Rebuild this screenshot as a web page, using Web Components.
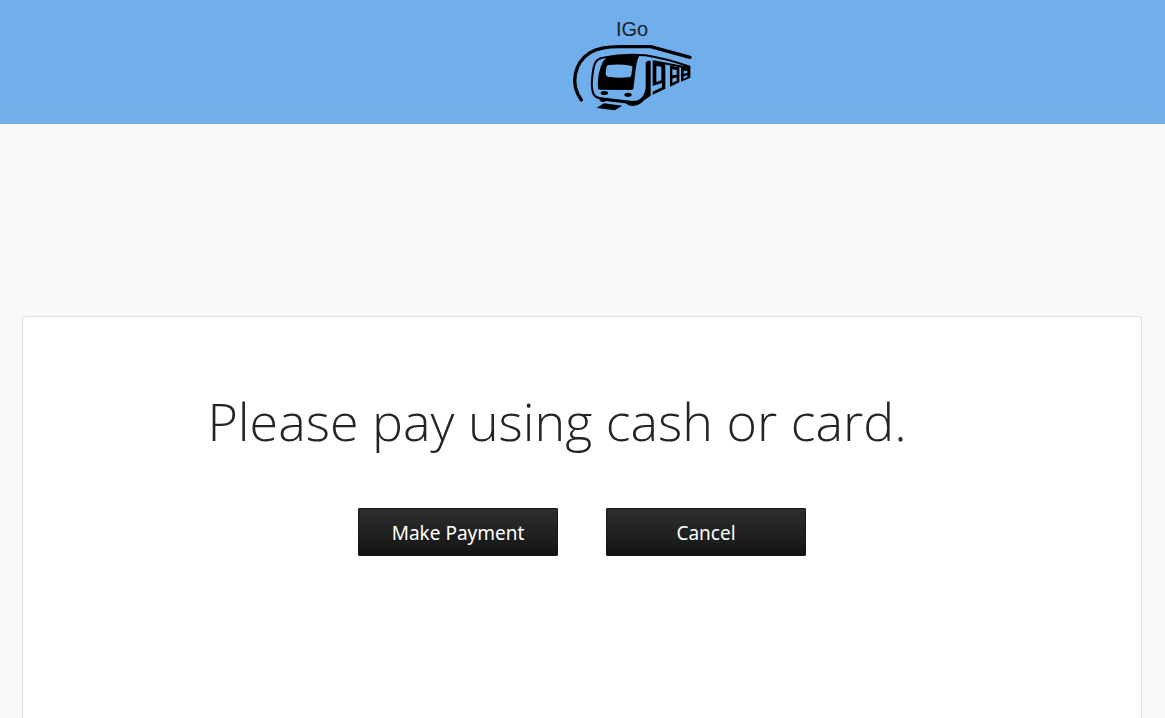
<!DOCTYPE html>
<html lang="en">
<head>
<meta charset="utf-8">
<meta name="viewport" content="width=device-width, initial-scale=1">
<title>IGo</title>
<style>
  body { margin: 0; background: #f8f9fb; color: #212529; font-family: "Noto Sans", "Open Sans", sans-serif; }
</style>
</head>
<body>
<igo-page>
  <igo-header slot="header"></igo-header>
  <igo-card>
    <igo-title>Please pay using cash or card.</igo-title>
    <igo-button slot="actions">Make Payment</igo-button>
    <igo-button slot="actions">Cancel</igo-button>
  </igo-card>
</igo-page>
<script>
const define = (name, html) => customElements.define(name, class extends HTMLElement {
  constructor() {
    super();
    this.attachShadow({ mode: "open" }).innerHTML = html;
  }
});

define("igo-page", `
  <style>
    :host { display: flex; flex-direction: column; height: 100vh; overflow: hidden; background: #f8f9fb; }
    main { display: flex; flex-direction: column; flex: 1; padding: 192px 23px 0 22px; }
  </style>
  <slot name="header"></slot>
  <main><slot></slot></main>`);

define("igo-header", `
  <style>
    :host { display: block; background: #71aeec; }
    header { display: flex; justify-content: center; padding: 20px 0 12px 98px; }
  </style>
  <header><igo-logo></igo-logo></header>`);

define("igo-logo", `
  <style>
    :host { display: block; }
    svg { display: block; width: 120px; height: 92px; overflow: visible; }
    text { font-family: "Liberation Sans", Arial, sans-serif; font-size: 60px; fill: #17202a; }
  </style>
  <svg viewBox="36 30 360 276" role="img" aria-label="IGo">
    <text x="216" y="78" text-anchor="middle">IGo</text>
    <path d="M64 270C28 220 44 158 90 128C113 114 144 110 180 110H272L390 142" fill="none" stroke="#000" stroke-width="10" stroke-linecap="round" stroke-linejoin="round"/>
    <path d="M116 264C94 260 93 225 98 190C102 160 108 146 128 143Q190 131 256 136Q325 147 391 171" fill="none" stroke="#000" stroke-width="6"/>
    <path d="M114 237Q110 190 130 153L145 139Q195 132 238 137Q230 150 226 185L221 231Q221 240 213 240L120 239Z"/>
    <path d="M145 165Q180 161 213 167Q219 168 217 175L214 196Q213 202 205 202Q175 205 144 200Q137 199 137 192L139 172Q140 166 145 165Z" fill="#71aeec"/>
    <ellipse cx="133" cy="249" rx="11" ry="6"/>
    <ellipse cx="204" cy="254" rx="11" ry="6"/>
    <path d="M102 249Q107 260 123 262L211 272Q235 275 247 260Q256 249 257 230V158L263 152H272V257L253 270Q240 287 218 288Q206 288 199 281L194 280L138 273L132 276Q119 276 117 266Q105 261 102 249Z"/>
    <path d="M110 294L132 280L187 287L164 301Z"/>
    <path fill-rule="evenodd" d="M278 152L316 159V236L278 254V245L306 232V219L278 228ZM289 168V216L304 211V170ZM330 167L358 172V217L330 230ZM337 178V196L350 194V180ZM337 206V218L350 212V202ZM363 172L391 176V203L363 215ZM371 182V191L382 189V183ZM371 199V206L382 201V196Z"/>
    <path d="M280 154L391 175" stroke="#000" stroke-width="6"/>
  </svg>`);

define("igo-card", `
  <style>
    :host { display: flex; flex-direction: column; flex: 1 0 auto; box-sizing: border-box; background: #fff;
      border: 1px solid #dfdfdf; border-bottom: 0; border-radius: 4px 4px 0 0; padding: 70px 0 48px; }
    .actions { display: flex; flex-wrap: wrap; justify-content: center; gap: 48px; margin-top: 54px; }
  </style>
  <slot></slot>
  <div class="actions"><slot name="actions"></slot></div>`);

define("igo-title", `
  <style>
    :host { display: block; padding-right: 50px; text-align: center; }
    h1 { margin: 0; font: 300 52px/67px "Open Sans", "Noto Sans", sans-serif; }
  </style>
  <h1><slot></slot></h1>`);

define("igo-button", `
  <style>
    :host { display: block; }
    button { display: block; width: 200px; height: 48px; padding: 2px 0 0; border: 1px solid #151716; border-radius: 1px;
      background: linear-gradient(#2d302f, #131514); color: #fff; font: 400 19px/24px "Noto Sans", "Open Sans", sans-serif; cursor: pointer; }
  </style>
  <button type="button"><slot></slot></button>`);
</script>
</body>
</html>
